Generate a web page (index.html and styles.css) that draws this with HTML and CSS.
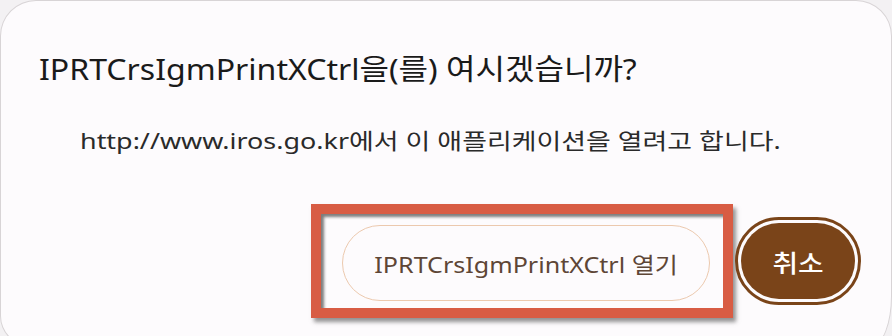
FILE: index.html
```html
<!DOCTYPE html>
<html lang="ko">
<head>
<meta charset="utf-8">
<link rel="stylesheet" href="styles.css">
</head>
<body>
<div class="dialog">
  <h1 class="title"><span class="t">IPRTCrsIgmPrintXCtrl을(를) 여시겠습니까?</span></h1>
  <p class="sub"><span class="t">http://www.iros.go.kr에서 이 애플리케이션을 열려고 합니다.</span></p>
  <div class="actions">
    <div class="highlight">
      <button class="btn-open"><span class="t">IPRTCrsIgmPrintXCtrl 열기</span></button>
    </div>
    <button class="btn-cancel"><span class="cancel-inner"><span class="t">취소</span></span></button>
  </div>
</div>
</body>
</html>
```
FILE: styles.css
```css
html, body {
  margin: 0;
  padding: 0;
  width: 892px;
  height: 336px;
  overflow: hidden;
  background: #f3f1f3;
}
.dialog {
  box-sizing: border-box;
  width: 892px;
  height: 346px;
  background: #fdfbfd;
  border: 1.5px solid #d8d4d6;
  border-radius: 36px 36px 20px 30px / 36px 36px 50px 30px;
  font-family: "Noto Sans", "Noto Sans CJK KR", sans-serif;
  padding: 48px 0 0 38px;
}
.t {
  display: inline-block;
  white-space: nowrap;
}
.title {
  margin: 0;
  font-size: 29px;
  font-weight: 400;
  line-height: 40px;
  color: #1a1a1a;
}
.title .t {
  transform: scaleX(1.105);
  transform-origin: left center;
}
.sub {
  margin: 36px 0 0 41px;
  font-size: 22px;
  line-height: 30px;
  color: #2a2a2a;
}
.sub .t {
  transform: scaleX(1.224);
  transform-origin: left center;
}
.actions {
  display: flex;
  justify-content: flex-end;
  align-items: center;
  margin-top: 49px;
  padding-right: 30px;
}
.highlight {
  border: 10px solid #d85c44;
  padding: 11px 13px 7px 21px;
  box-shadow: inset 3px 3px 3px rgba(70,70,70,0.7), 3px 4px 4px rgba(60,60,60,0.55);
  background: #fdfbfd;
}
.btn-open {
  display: block;
  width: 368px;
  height: 76px;
  border-radius: 38px;
  border: 1.5px solid #ecc9ae;
  background: #fdfbfd;
  font-family: "Noto Sans", "Noto Sans CJK KR", sans-serif;
  font-size: 22px;
  color: #5e4636;
  padding: 0;
}
.btn-open .t {
  transform: scaleX(1.14);
}
.btn-cancel {
  margin-left: 2px;
  width: 126px;
  height: 88px;
  border-radius: 44px;
  border: 3px solid #7a4419;
  background: #fdfbfd;
  padding: 3px;
  box-sizing: border-box;
  font-family: "Noto Sans CJK KR", sans-serif;
}
.cancel-inner {
  display: flex;
  align-items: center;
  justify-content: center;
  width: 100%;
  height: 100%;
  border-radius: 40px;
  background: #7a4419;
  color: #ffffff;
  font-size: 24px;
  font-weight: 500;
}
.cancel-inner .t {
  transform: scaleX(1.16);
}
```
